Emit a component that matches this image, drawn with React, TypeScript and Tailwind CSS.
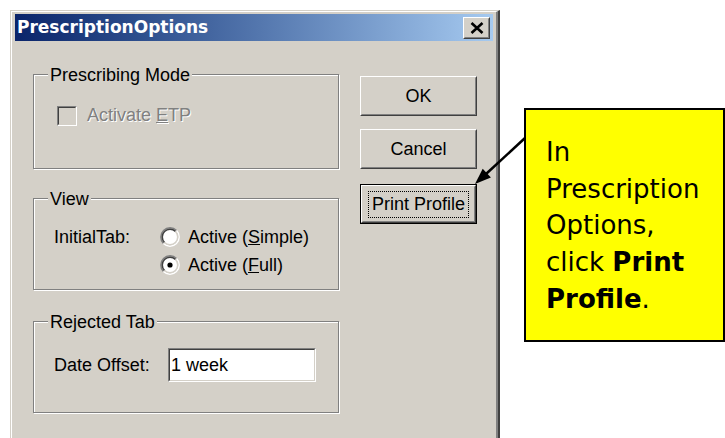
import React from 'react';

// classic 3D edges
const raised =
  'border border-t-white border-l-white border-r-[#404040] border-b-[#404040] bg-[#d4d0c8]';
const raisedInner =
  'border border-t-[#d4d0c8] border-l-[#d4d0c8] border-r-[#808080] border-b-[#808080]';
const sunken =
  'border border-t-[#808080] border-l-[#808080] border-r-white border-b-white';
const sunkenInner =
  'border border-t-[#404040] border-l-[#404040] border-r-[#d4d0c8] border-b-[#d4d0c8]';

const GroupBox: React.FC<{ title: string; className?: string; children: React.ReactNode }> = ({
  title,
  className,
  children,
}) => (
  <div
    className={`flex flex-col border border-[#808080] shadow-[1px_1px_0_#fff,inset_1px_1px_0_#fff] ${className}`}
  >
    <div className="-mt-[10px] ml-[14px] self-start bg-[#d4d0c8] px-[2px] leading-[20px]">{title}</div>
    {children}
  </div>
);

const Radio: React.FC<{ checked?: boolean }> = ({ checked }) => (
  <svg width="20" height="20" viewBox="0 0 20 20" className="shrink-0">
    <circle cx="10" cy="10" r="8" fill="#fff" />
    <path d="M3.46 16.54 A9.25 9.25 0 0 1 16.54 3.46" stroke="#808080" strokeWidth="1.5" fill="none" />
    <path d="M4.52 15.48 A7.75 7.75 0 0 1 15.48 4.52" stroke="#404040" strokeWidth="1.5" fill="none" />
    <path d="M16.54 3.46 A9.25 9.25 0 0 1 3.46 16.54" stroke="#ffffff" strokeWidth="1.5" fill="none" />
    <path d="M15.48 4.52 A7.75 7.75 0 0 1 4.52 15.48" stroke="#d4d0c8" strokeWidth="1.5" fill="none" />
    {checked && <circle cx="10" cy="10" r="2.6" fill="#000" />}
  </svg>
);

const DialogButton: React.FC<{ label: string; className?: string }> = ({ label, className }) => (
  <button className={`h-[40px] w-[117px] p-0 ${raised} ${className}`}>
    <span className={`flex h-full w-full items-center justify-center ${raisedInner}`}>{label}</span>
  </button>
);

export default function App() {
  return (
    <div className="relative flex h-[438px] w-[725px] overflow-hidden bg-white">
      {/* dialog window */}
      <div className="ml-[10px] mt-[10px] h-[432px] w-[490px] shrink-0 border border-b-2 border-r-2 border-t-[#d4d0c8] border-l-[#d4d0c8] border-r-[#404040] border-b-[#404040]">
        <div className="flex h-full flex-col border border-b-2 border-r-2 border-t-white border-l-white border-r-[#808080] border-b-[#808080] bg-[#d4d0c8] px-[3px] pt-[2px] font-['Liberation_Sans',Arial,sans-serif] text-[18px] text-black">
          {/* title bar */}
          <div className="flex h-[27px] shrink-0 items-center justify-between bg-gradient-to-r from-[#0a246a] to-[#a6caf0] pl-[2px] pr-[3px]">
            <span className="font-['DejaVu_Sans',sans-serif] text-[17px] font-bold leading-none text-white">
              PrescriptionOptions
            </span>
            <button className={`h-[22px] w-[27px] p-0 ${raised}`}>
              <span className={`flex h-full w-full items-center justify-center ${raisedInner}`}>
                <svg width="14" height="12" viewBox="0 0 14 12">
                  <path d="M1.5 1 L12.5 11 M12.5 1 L1.5 11" stroke="#000" strokeWidth="2.6" />
                </svg>
              </span>
            </button>
          </div>

          {/* client area */}
          <div className="flex pl-[18px]">
            <div className="flex w-[306px] flex-col">
              <GroupBox title="Prescribing Mode" className="mt-[33px] h-[95px]">
                <div className="ml-[23px] mt-[17px] flex items-center gap-[10px]">
                  <div className={`h-[20px] w-[20px] ${sunken}`}>
                    <div className={`h-full w-full bg-[#d4d0c8] ${sunkenInner}`} />
                  </div>
                  <span className="text-[#808080] [text-shadow:1px_1px_0_#fff]">
                    Activate <span className="underline">E</span>TP
                  </span>
                </div>
              </GroupBox>

              <GroupBox title="View" className="mt-[29px] h-[92px]">
                <div className="ml-[20px] mt-[14px] flex">
                  <span className="w-[106px] leading-[28px]">InitialTab:</span>
                  <div className="flex flex-col">
                    <div className="flex h-[28px] items-center gap-[8px]">
                      <Radio />
                      <span>
                        Active (<span className="underline">S</span>imple)
                      </span>
                    </div>
                    <div className="flex h-[28px] items-center gap-[8px]">
                      <Radio checked />
                      <span>
                        Active (<span className="underline">F</span>ull)
                      </span>
                    </div>
                  </div>
                </div>
              </GroupBox>

              <GroupBox title="Rejected Tab" className="mt-[31px] h-[92px]">
                <div className="ml-[20px] mt-[16px] flex items-center">
                  <span className="w-[114px]">Date Offset:</span>
                  <div className={`h-[34px] w-[148px] ${sunken}`}>
                    <div className={`flex h-full w-full items-center bg-white pl-[1px] ${sunkenInner}`}>
                      1 week
                    </div>
                  </div>
                </div>
              </GroupBox>
            </div>

            <div className="ml-[21px] flex flex-col">
              <DialogButton label="OK" className="mt-[35px] h-[39px]" />
              <DialogButton label="Cancel" className="mt-[13px]" />
              <div className="mt-[15px] h-[40px] w-[117px] border border-black">
                <button className={`h-full w-full p-0 ${raised}`}>
                  <span className={`flex h-full w-full items-center justify-center ${raisedInner}`}>
                    <span className="flex h-[27px] w-[101px] items-center justify-center border border-dotted border-black">
                      Print Profile
                    </span>
                  </span>
                </button>
              </div>
            </div>
          </div>
        </div>
      </div>

      {/* yellow note */}
      <div className="ml-[24px] mt-[108px] h-[234px] w-[201px] shrink-0 border-2 border-black bg-[#ffff00] pl-[20px] pt-[24px] font-['DejaVu_Sans',Verdana,sans-serif] text-[26px] leading-[36.7px] text-black">
        In
        <br />
        Prescription
        <br />
        Options,
        <br />
        click <b>Print</b>
        <br />
        <b>Profile</b>.
      </div>

      {/* pointer arrow */}
      <svg className="absolute left-[468px] top-[130px]" width="64" height="64" viewBox="0 0 64 64">
        <path d="M57 8 L18 44" stroke="#000" strokeWidth="2.5" />
        <path d="M7 54 L22.9 47.6 L14.7 38.8 Z" fill="#000" />
      </svg>
    </div>
  );
}
